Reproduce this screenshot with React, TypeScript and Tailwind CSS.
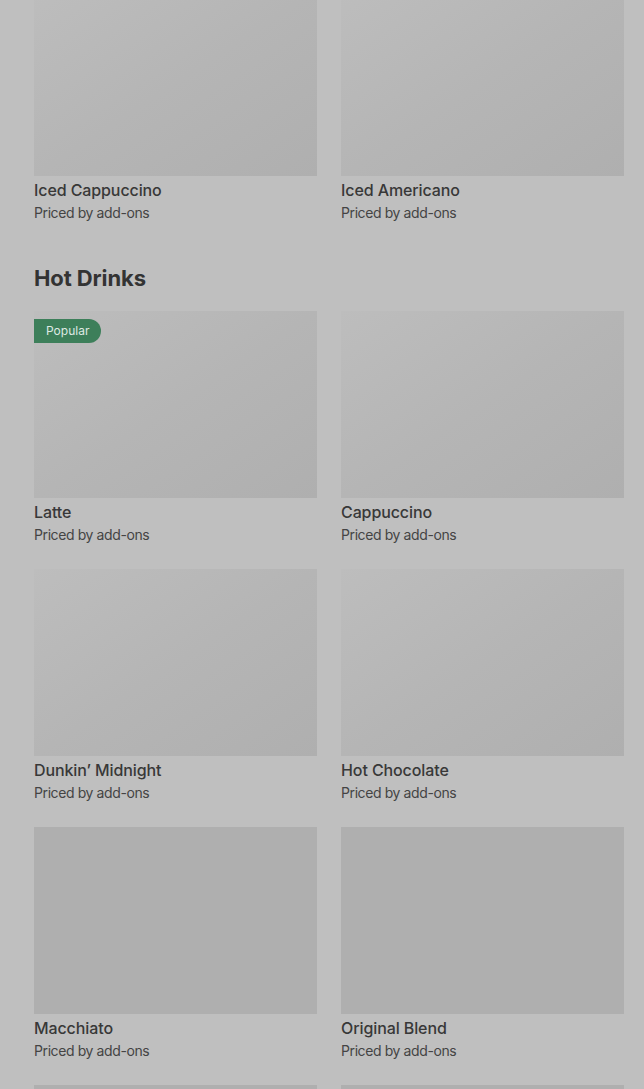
const font = { fontFamily: 'Inter, Roboto, "Liberation Sans", sans-serif' }

type Item = { name: string; popular?: boolean; loaded?: boolean }

const iced: Item[] = [{ name: 'Iced Cappuccino' }, { name: 'Iced Americano' }]
const hot: Item[] = [
  { name: 'Latte', popular: true },
  { name: 'Cappuccino' },
  { name: 'Dunkin\u2019 Midnight' },
  { name: 'Hot Chocolate' },
  { name: 'Macchiato', loaded: true },
  { name: 'Original Blend', loaded: true },
  { name: '', loaded: true },
  { name: '', loaded: true },
]

function Card({ item }: { item: Item }) {
  return (
    <div>
      <div
        className={
          'relative h-[187px] ' +
          (item.loaded
            ? 'bg-[#afafaf]'
            : 'bg-gradient-to-br from-[#bdbdbd] via-[#b5b5b5] to-[#afafaf]')
        }
      >
        {item.popular && (
          <span className="absolute left-0 top-2 h-6 pl-3 pr-3 rounded-r-full bg-[#3d7f5a] text-[#dfe9e3] text-[12px] leading-6">
            Popular
          </span>
        )}
      </div>
      {item.name && (
        <>
          <p className="mt-1 text-[16px] leading-5 font-medium tracking-[-0.1px] text-[#383838]">{item.name}</p>
          <p className="mt-1 text-[14px] leading-[18px] tracking-[-0.4px] text-[#444444]">Priced by add-ons</p>
        </>
      )}
    </div>
  )
}

export default function App() {
  return (
    <div className="h-screen bg-[#bfbfbf] overflow-hidden" style={font}>
      <div className="-mt-[11px] pl-[34px] pr-5">
        <div className="grid grid-cols-2 gap-x-6">
          {iced.map(i => <Card key={i.name} item={i} />)}
        </div>
        <h2 className="mt-[42px] mb-[19px] text-[22px] leading-7 font-bold tracking-[-0.1px] text-[#333333]">Hot Drinks</h2>
        <div className="grid grid-cols-2 gap-x-6 gap-y-[25px]">
          {hot.map((i, n) => <Card key={n} item={i} />)}
        </div>
      </div>
    </div>
  )
}
